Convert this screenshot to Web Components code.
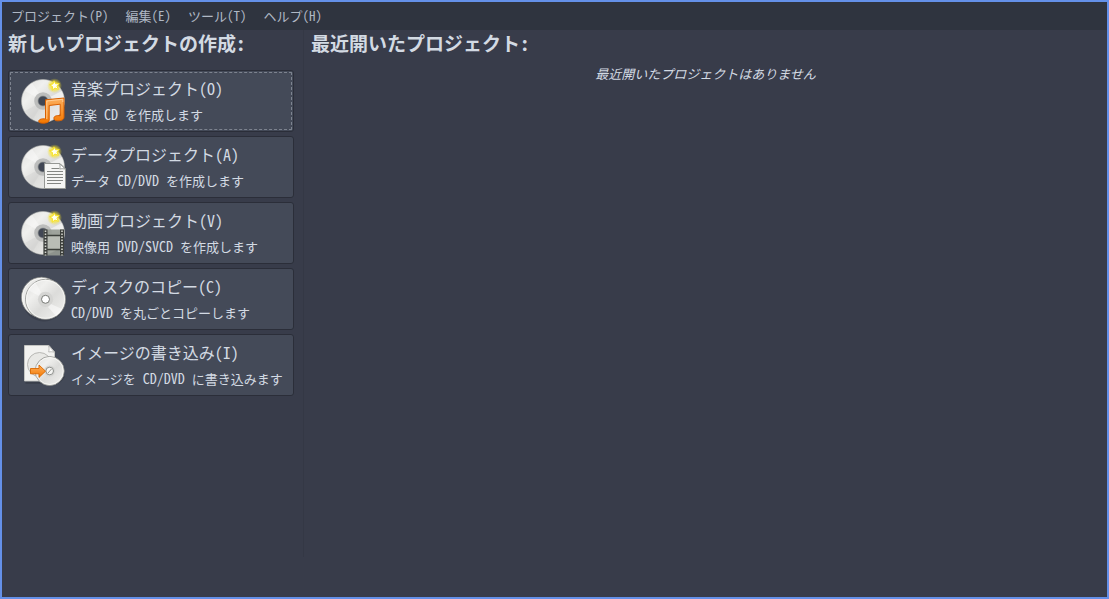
<!DOCTYPE html>
<html lang="ja">
<head>
<meta charset="utf-8">
<meta name="viewport" content="width=device-width, initial-scale=1">
<title>ディスク作成</title>
<style>
  html, body { margin: 0; min-height: 100%; background: #383c4a; }
  body {
    --text: #d3dae3;
    --text-dim: #afb8c5;
    --window: #383c4a;
    --bar: #2f343f;
    --button: #444a58;
    --edge: #2b2e39;
    --accent: #6490e8;
    color: var(--text);
    font: 13px/26px "Noto Sans CJK JP", "Liberation Sans", sans-serif;
    font-feature-settings: "hwid";
  }
  /* half-width letters are set one size up beside the kana */
  .latin { font-size: 14px; line-height: 1; }
</style>
</head>
<body>
<burner-window>
  <menu-bar slot="menu">
    <menu-item>プロジェクト(P)</menu-item>
    <menu-item>編集(E)</menu-item>
    <menu-item>ツール(T)</menu-item>
    <menu-item>ヘルプ(H)</menu-item>
  </menu-bar>
  <project-panel slot="side">
    <span slot="heading">新しいプロジェクトの作成:</span>
    <project-button icon="music" current>音楽プロジェクト(O)<span slot="note">音楽<span class="latin"> CD </span>を作成します</span></project-button>
    <project-button icon="data">データプロジェクト(A)<span slot="note">データ<span class="latin"> CD/DVD </span>を作成します</span></project-button>
    <project-button icon="video">動画プロジェクト(V)<span slot="note">映像用<span class="latin"> DVD/SVCD </span>を作成します</span></project-button>
    <project-button icon="copy">ディスクのコピー(C)<span slot="note"><span class="latin">CD/DVD </span>を丸ごとコピーします</span></project-button>
    <project-button icon="image">イメージの書き込み(I)<span slot="note">イメージを<span class="latin"> CD/DVD </span>に書き込みます</span></project-button>
  </project-panel>
  <recent-panel slot="main">
    <span slot="heading">最近開いたプロジェクト:</span>
    最近開いたプロジェクトはありません
  </recent-panel>
</burner-window>

<script>
const define = (name, html) => customElements.define(name, class extends HTMLElement {
  constructor() {
    super();
    this.attachShadow({ mode: "open" }).innerHTML = html;
  }
});

define("burner-window", `
  <style>
    :host { display: flex; flex-direction: column; box-sizing: border-box; min-height: 100vh;
      border: 2px solid var(--accent); background: var(--window); }
    .content { flex: 1; display: grid; grid-template-columns: auto 1px 1fr; padding-bottom: 40px; }
    .rule { background: #343845; }
  </style>
  <slot name="menu"></slot>
  <div class="content">
    <slot name="side"></slot>
    <div class="rule"></div>
    <slot name="main"></slot>
  </div>`);

define("menu-bar", `
  <style>
    :host { display: block; background: var(--bar); color: var(--text-dim); }
    nav { display: flex; gap: 1px; padding-left: 1px; height: 28px; }
  </style>
  <nav><slot></slot></nav>`);

define("menu-item", `
  <style>
    :host { display: block; }
    button { appearance: none; border: 0; background: none; margin: 0; padding: 0 8px;
      height: 28px; color: inherit; font: inherit; font-feature-settings: inherit; line-height: 28px; }
  </style>
  <button type="button"><slot></slot></button>`);

define("project-panel", `
  <style>
    :host { display: flex; flex-direction: column; padding: 0 9px 0 6px; }
    h2 { margin: 0 0 14px; font-size: 19px; line-height: 26px; font-weight: 700; }
    .list { display: grid; gap: 4px; width: 286px; }
  </style>
  <h2><slot name="heading"></slot></h2>
  <div class="list"><slot></slot></div>`);

define("recent-panel", `
  <style>
    :host { display: block; }
    h2 { margin: 0 0 6px 7px; font-size: 19px; line-height: 26px; font-weight: 700; }
    p { margin: 0; text-align: center; font-style: italic; line-height: 24px; }
  </style>
  <h2><slot name="heading"></slot></h2>
  <p><slot></slot></p>`);

const DEFS = `
  <defs>
    <linearGradient id="disc" x1="0" y1="0" x2="1" y2="1">
      <stop offset="0" stop-color="#dededc"/><stop offset=".3" stop-color="#f0f0ee"/>
      <stop offset=".55" stop-color="#dcdcda"/><stop offset="1" stop-color="#f3f3f1"/>
    </linearGradient>
    <radialGradient id="glow">
      <stop offset="0" stop-color="#fff04a"/><stop offset=".5" stop-color="#fbe62e" stop-opacity=".75"/>
      <stop offset="1" stop-color="#f5e020" stop-opacity="0"/>
    </radialGradient>
    <linearGradient id="orange" x1="0" y1="0" x2="0" y2="1">
      <stop offset="0" stop-color="#fcaf5e"/><stop offset="1" stop-color="#f57900"/>
    </linearGradient>
  </defs>`;

const STAR = `
  <circle cx="35.5" cy="8.7" r="7.5" fill="url(#glow)"/>
  <path d="M35 3.8l1.7 3 3.5-.4-2.3 2.7 1.5 3.3-3.4-1.4-2.8 2.2.3-3.6-3-1.9 3.5-.8z" fill="#fffff0" stroke="#f7e227" stroke-width="1"/>`;

const BLANK_DISC = `
  <ellipse cx="25" cy="26" rx="21" ry="20.500" fill="#20232c" opacity=".28"/>
  <path fill-rule="evenodd" d="M24 2.500a21.500 21.500 0 1 0 .01 0zM24 19.200a4.800 4.800 0 1 1-.01 0z" fill="url(#disc)" stroke="#b2b3b0" stroke-width=".6"/>
  <path d="M20 16L13 6A21 21 0 0 0 6 14l11 6z" fill="#fff" opacity=".35"/>
  <path d="M17 28L6 34a21 21 0 0 0 8 8l6-10z" fill="#c5c5c2" opacity=".25"/>
  <path d="M31 20l12-6a21 21 0 0 1 2 8L32 24z" fill="#fff" opacity=".5"/>
  <circle cx="24" cy="24" r="6.800" fill="none" stroke="#bcbdbc" stroke-width="4"/>
  <circle cx="24" cy="24" r="5" fill="#414754" stroke="#8e9090" stroke-width=".7"/>` + STAR;

const pressedDisc = (x, y, r) => `
  <circle cx="${x}" cy="${y}" r="${r}" fill="url(#disc)" stroke="#8e8f8c" stroke-width=".8"/>
  <circle cx="${x}" cy="${y}" r="${r - 1}" fill="none" stroke="#fafaf8" stroke-width=".8"/>
  <circle cx="${x}" cy="${y}" r="${r * 0.38}" fill="#d5d5d3"/>`;

const ICONS = {
  music: BLANK_DISC + `
    <g fill="url(#orange)" stroke="#d85f00" stroke-width="1" stroke-linejoin="round">
      <path d="M26.500 22.800L45 21V40.200C45 43 41.500 44 38 43.800S34.200 40.300 36 39.300c1.700-.9 3.700-.8 5.200-.5V27.200L30.200 28.500V43c0 2.300-3 3.300-6.500 3.200-4 0-5.200-2.200-2.700-3.700 1.700-.8 3.800-.8 5.500-.4z"/>
    </g>
    <path d="M27.800 24L43.800 22.300V25M27.800 24v18" fill="none" stroke="#ffd09a" stroke-width=".9"/>`,
  data: BLANK_DISC + `
    <path d="M25.500 20.500H41L46.500 26V45.500H25.500z" fill="#f5f5f3" stroke="#969894" stroke-width="1"/>
    <path d="M40.500 20.500c.8 2 .7 3.800.2 5.500 2-.5 4-.4 5.800.2z" fill="#fff" stroke="#969894" stroke-width=".9"/>
    <path d="M32.500 25.500H40M28 28.500H44M28 31.500H44M28 34.500H44M28 37.500H44M28 40.500H42" stroke="#777975" stroke-width=".9"/>`,
  video: BLANK_DISC + `
    <path d="M24.500 20.500h20.500V46.500H24.500z" fill="#969b94" opacity=".9"/>
    <path d="M28.500 27h12.500v13H28.500z" fill="#b9bdb5"/>
    <path d="M24.500 20.500h4v26h-4zM41 20.500h4v26h-4z" fill="#3c3f3c"/>
    <path d="M28 26.500h13M28 40.500h13" stroke="#3c403b" stroke-width="1.400"/>
    <path d="M26.500 21.500v25M43 21.500v25" stroke="#d2d4ce" stroke-width="1.600" stroke-dasharray="1.400 1.600"/>`,
  copy: `
    <circle cx="25" cy="25" r="21.500" fill="#20232c" opacity=".25"/>` +
    pressedDisc(22.500, 22.300, 20) + pressedDisc(26.500, 24.300, 20) + `
    <path d="M22 17L16 7a20 20 0 0 0-7 8l11 6z" fill="#fff" opacity=".4"/>
    <path d="M32 29l11 5a20 20 0 0 1-6 7l-8-9z" fill="#fff" opacity=".5"/>
    <circle cx="26.500" cy="24.300" r="4" fill="#fff" stroke="#777975" stroke-width="1"/>`,
  image: `
    <path d="M6.500 41.500h28M33 43a15 15 0 0 0 12-8" stroke="#20232c" stroke-width="2.500" opacity=".3" fill="none"/>
    <path d="M5.500 4.500H30L35.500 11V40H5.500z" fill="#f2f2f0" stroke="#c8c9c5" stroke-width=".9"/>
    <path d="M29.500 4.500c.8 2.200.6 4 .2 6.500 2-.4 4-.3 5.800.3z" fill="#fff" stroke="#b5b6b2" stroke-width=".9"/>
    <circle cx="20.500" cy="23.500" r="12" fill="#e8e8e5" stroke="#a9aaa6" stroke-width=".8"/>` +
    pressedDisc(30.700, 30, 14.500) + `
    <circle cx="30.700" cy="30" r="3.800" fill="#f4f4f2" stroke="#858783" stroke-width=".9"/>
    <path d="M29 32l3.500-4" stroke="#9b9c98" stroke-width="1"/>
    <path d="M11.500 27.500h8.500v-3.500l6.500 6.200-6.500 6.200v-3.600h-8.500z" fill="url(#orange)" stroke="#d96800" stroke-width=".9" stroke-linejoin="round"/>`
};

customElements.define("disc-icon", class extends HTMLElement {
  connectedCallback() {
    if (this.shadowRoot) return;
    this.attachShadow({ mode: "open" }).innerHTML = `
      <style>:host { display: block; width: 48px; height: 48px; } svg { display: block; }</style>
      <svg width="48" height="48" viewBox="0 0 48 48" aria-hidden="true">${DEFS}${ICONS[this.getAttribute("name")]}</svg>`;
  }
});

customElements.define("project-button", class extends HTMLElement {
  connectedCallback() {
    if (this.shadowRoot) return;
    this.attachShadow({ mode: "open" }).innerHTML = `
      <style>
        :host { display: block; }
        button { appearance: none; display: flex; align-items: center; gap: 4px; box-sizing: border-box;
          width: 100%; height: 62px; margin: 0; padding: 0 8px 0 10px; border: 1px solid var(--edge);
          border-radius: 3px; background: var(--button); color: inherit; text-align: left;
          font: inherit; font-feature-settings: inherit; }
        :host([current]) button { outline: 1px dashed #7d838f; outline-offset: -3px; }
        .text { display: grid; padding-top: 2px; white-space: nowrap; }
        .title { font-size: 16px; line-height: 26px; }
        .note { line-height: 28px; }
      </style>
      <button type="button">
        <disc-icon name="${this.getAttribute("icon")}"></disc-icon>
        <span class="text"><span class="title"><slot></slot></span><span class="note"><slot name="note"></slot></span></span>
      </button>`;
  }
});
</script>
</body>
</html>
